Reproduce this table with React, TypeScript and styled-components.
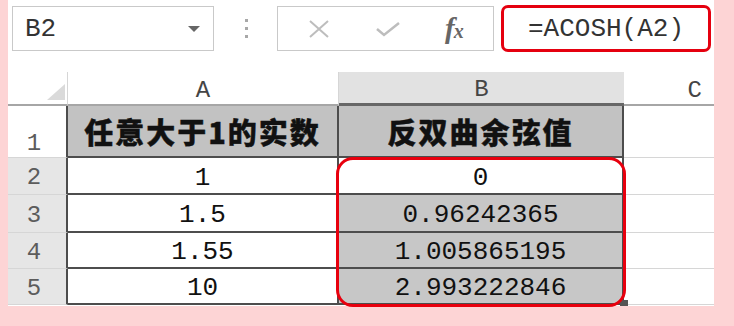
import React from 'react';
import styled, { createGlobalStyle, css } from 'styled-components';

const Global = createGlobalStyle`
  body {
    margin: 0;
    background: #fdd4d5;
  }
`;

const MONO = `"Liberation Mono", "DejaVu Sans Mono", monospace`;
const CJK = `"Noto Sans CJK SC", "Noto Sans", sans-serif`;

const Page = styled.div`
  width: 734px;
  height: 326px;
  background: #fdd4d5;
  overflow: hidden;
`;

const Sheet = styled.div`
  margin-left: 8px;
  width: 706px;
  height: 306px;
  background: #ffffff;
  display: flex;
  flex-direction: column;
`;

const Toolbar = styled.div`
  height: 57px;
  display: flex;
  align-items: center;
  padding-left: 4px;
  box-sizing: border-box;
`;

const NameBox = styled.div`
  width: 202px;
  height: 45px;
  box-sizing: border-box;
  border: 1px solid #c9c9c9;
  display: flex;
  align-items: center;
  justify-content: space-between;
  padding: 0 13px 0 12px;
  font-family: ${MONO};
  font-size: 26px;
  color: #333;
`;

const Caret = styled.span`
  width: 0;
  height: 0;
  border-left: 6px solid transparent;
  border-right: 6px solid transparent;
  border-top: 6px solid #666;
`;

const Dots = styled.div`
  margin-left: 31px;
  display: flex;
  flex-direction: column;
  gap: 5px;

  span {
    width: 3px;
    height: 3px;
    background: #a8a8a8;
  }
`;

const ButtonBox = styled.div`
  margin-left: 29px;
  width: 217px;
  height: 45px;
  box-sizing: border-box;
  border: 1px solid #c9c9c9;
  display: flex;
  align-items: center;
  justify-content: space-around;
  padding: 0 8px;
`;

const Fx = styled.span`
  font-family: "Liberation Serif", serif;
  font-style: italic;
  font-weight: bold;
  font-size: 29px;
  color: #666;
  letter-spacing: -1px;

  small {
    font-size: 20px;
  }
`;

const FormulaBar = styled.div`
  margin-left: 7px;
  width: 210px;
  height: 47px;
  box-sizing: border-box;
  border: 3px solid #e5000f;
  border-radius: 7px;
  display: flex;
  align-items: center;
  justify-content: center;
  font-family: ${MONO};
  font-size: 26px;
  color: #333;
`;

const GridWrap = styled.div`
  position: relative;
  margin-top: 15px;
`;

const Grid = styled.div`
  display: grid;
  grid-template-columns: 60px 271px 285px 90px;
  grid-template-rows: 34px 52px 37px 38px 36px 36px;
`;

type CellProps = {
  $bg?: string;
  $right?: 'light' | 'dark' | 'none';
  $bottom?: 'light' | 'dark' | 'sel' | 'header';
  $valign?: 'center' | 'end';
};

const edge = (kind?: string) => {
  switch (kind) {
    case 'dark':
      return '2px solid #4d4d4d';
    case 'sel':
      return '3px solid #676767';
    case 'header':
      return '2px solid #a6a6a6';
    case 'none':
      return 'none';
    default:
      return '1px solid #d6d6d6';
  }
};

const Cell = styled.div<CellProps>`
  box-sizing: border-box;
  background: ${(p) => p.$bg || '#ffffff'};
  border-right: ${(p) => edge(p.$right)};
  border-bottom: ${(p) => edge(p.$bottom)};
  display: flex;
  justify-content: center;
  align-items: ${(p) => (p.$valign === 'end' ? 'flex-end' : 'center')};
  overflow: hidden;
`;

const ColLabel = styled(Cell)`
  font-family: ${MONO};
  font-size: 24px;
  color: #454545;
  padding-top: 4px;
`;

const RowLabel = styled(Cell)`
  font-family: ${MONO};
  font-size: 24px;
  color: #5c5c5c;
  padding-right: 6px;
  padding-top: 3px;
`;

const Value = styled(Cell)`
  font-family: ${MONO};
  font-size: 26px;
  color: #111;
  padding-top: 4px;
`;

const Title = styled(Cell)<{ $bold?: boolean }>`
  font-family: ${CJK};
  font-size: 29px;
  font-weight: 900;
  letter-spacing: 2px;
  color: #111;
  ${(p) =>
    p.$bold &&
    css`
      -webkit-text-stroke: 0.4px #111;
    `}
`;

const Selection = styled.div`
  position: absolute;
  left: 328px;
  top: 85px;
  width: 290px;
  height: 150px;
  box-sizing: border-box;
  border: 3px solid #e8000e;
  border-radius: 17px;
  pointer-events: none;
`;

const FillHandle = styled.div`
  position: absolute;
  left: 612px;
  top: 228px;
  width: 8px;
  height: 6px;
  background: #555;
`;

const SEL = '#c7c7c7';
const HEAD = '#c2c2c2';
const ROWSEL = '#e6e6e6';

const rows = [
  { n: '3', a: '1.5', b: '0.96242365' },
  { n: '4', a: '1.55', b: '1.005865195' },
  { n: '5', a: '10', b: '2.993222846' },
];

const App: React.FC = () => {
  return (
    <Page>
      <Global />
      <Sheet>
        <Toolbar>
          <NameBox>
            B2
            <Caret />
          </NameBox>
          <Dots>
            <span />
            <span />
            <span />
          </Dots>
          <ButtonBox>
            <svg width="22" height="20" viewBox="0 0 22 20">
              <path d="M2 2 L20 18 M20 2 L2 18" stroke="#bdbdbd" strokeWidth="2" fill="none" />
            </svg>
            <svg width="26" height="16" viewBox="0 0 26 16">
              <path d="M2 8 L9 14 L24 2" stroke="#bdbdbd" strokeWidth="2.5" fill="none" />
            </svg>
            <Fx>
              f<small>x</small>
            </Fx>
          </ButtonBox>
          <FormulaBar>=ACOSH(A2)</FormulaBar>
        </Toolbar>

        <GridWrap>
          <Grid>
            {/* header row */}
            <Cell $bottom="header" $valign="end" style={{ justifyContent: 'flex-end' }}>
              <svg width="28" height="24" viewBox="0 0 28 24">
                <polygon points="26,4 26,20 8,20" fill="#dadada" />
              </svg>
            </Cell>
            <ColLabel $bottom="header">A</ColLabel>
            <ColLabel $bg="#e2e2e2" $bottom="sel" $right="none">B</ColLabel>
            <ColLabel $bottom="header" $right="none" style={{ justifyContent: 'flex-end', paddingRight: 12 }}>
              C
            </ColLabel>

            {/* row 1 */}
            <RowLabel $right="dark" $valign="end">1</RowLabel>
            <Title $bg={HEAD} $right="dark" $bottom="dark" $bold>
              任意大于1的实数
            </Title>
            <Title $bg={HEAD} $right="dark" $bottom="dark" $bold>
              反双曲余弦值
            </Title>
            <Cell $right="none" />

            {/* row 2 */}
            <RowLabel $bg={ROWSEL} $right="dark">2</RowLabel>
            <Value $right="dark" $bottom="dark">1</Value>
            <Value $right="dark" $bottom="dark">0</Value>
            <Cell $right="none" />

            {rows.map((r) => (
              <React.Fragment key={r.n}>
                <RowLabel $bg={ROWSEL} $right="dark">{r.n}</RowLabel>
                <Value $right="dark" $bottom="dark">{r.a}</Value>
                <Value $bg={SEL} $right="dark" $bottom="dark">{r.b}</Value>
                <Cell $right="none" />
              </React.Fragment>
            ))}
          </Grid>
          <FillHandle />
          <Selection />
        </GridWrap>
      </Sheet>
    </Page>
  );
};

export default App;
